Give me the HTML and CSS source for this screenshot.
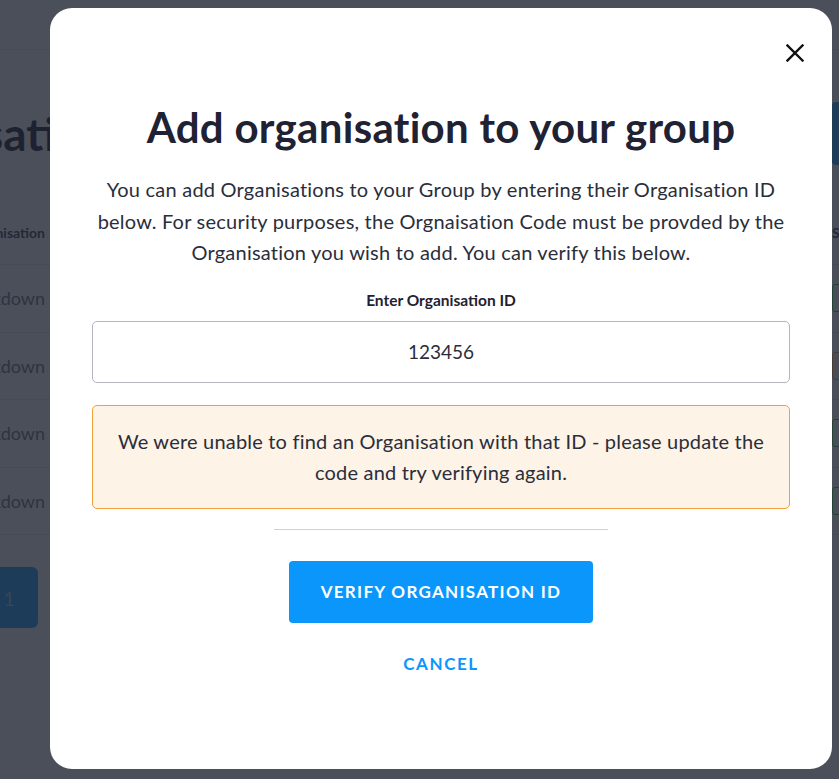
FILE: index.html
```html
<!DOCTYPE html>
<html lang="en">
<head>
<meta charset="utf-8">
<title>Add organisation to your group</title>
<link rel="stylesheet" href="styles.css">
</head>
<body>
<div class="page">
  <header class="topbar">
    <div class="tabs"><span class="tab">Organisations</span><span class="tab active">Settings</span></div>
  </header>
  <div class="title-row">
    <h2 class="page-title">Organisations</h2>
    <button class="primary-btn">Add organisation</button>
  </div>
  <div class="table">
    <div class="row head"><span class="cell">Organisation</span><span class="cell mid"></span><span class="cell">Status</span></div>
    <div class="row"><span class="cell">Breakdown</span><span class="cell mid"></span><span class="cell"><span class="badge ok">Verified</span></span></div>
    <div class="row"><span class="cell">Breakdown</span><span class="cell mid"></span><span class="cell"><span class="badge warn">Pending</span></span></div>
    <div class="row"><span class="cell">Breakdown</span><span class="cell mid"></span><span class="cell"><span class="badge ok">Verified</span></span></div>
    <div class="row"><span class="cell">Breakdown</span><span class="cell mid"></span><span class="cell"><span class="badge ok">Verified</span></span></div>
  </div>
  <div class="pager"><span class="page-btn">1</span></div>
</div>

<div class="overlay"></div>

<div class="modal" role="dialog" aria-labelledby="modal-title">
  <button class="close" aria-label="Close">
    <svg viewBox="0 0 18 18" width="18" height="18"><path d="M1.5 1.5 L16.5 16.5 M16.5 1.5 L1.5 16.5" stroke="#111" stroke-width="2.4" stroke-linecap="square" fill="none"/></svg>
  </button>
  <h1 id="modal-title" class="modal-title">Add organisation to your group</h1>
  <p class="intro">You can add Organisations to your Group by entering their Organisation ID below. For security purposes, the Orgnaisation Code must be provded by the Organisation you wish to add. You can verify this below.</p>
  <label class="field-label" for="org-id">Enter Organisation ID</label>
  <input id="org-id" class="field" type="text" value="123456">
  <div class="alert">We were unable to find an Organisation with that ID - please update the code and try verifying again.</div>
  <hr class="divider">
  <button class="verify">VERIFY ORGANISATION ID</button>
  <button class="cancel">CANCEL</button>
</div>
</body>
</html>
```

FILE: styles.css
```css
* { box-sizing: border-box; }
html, body { margin: 0; padding: 0; }
body {
  width: 839px;
  height: 779px;
  overflow: hidden;
  background: #ffffff;
  font-family: "Lato", "Liberation Sans", sans-serif;
}

/* background page */
.page { width: 839px; overflow: hidden; }
.topbar {
  height: 50px;
  border-bottom: 1px solid #e8e9ec;
  display: flex;
  justify-content: flex-end;
}
.tabs { display: flex; margin-right: -200px; }
.tab {
  font-size: 16px;
  font-weight: 700;
  color: #333;
  padding: 12px 16px 0;
  height: 49px;
}
.tab.active { color: #1a9fff; border-bottom: 2px solid #1a9fff; }
.tabs .tab:first-child { width: 0; overflow: hidden; padding: 0; }

.title-row {
  height: 150px;
  display: flex;
  align-items: flex-start;
  justify-content: space-between;
}
.page-title {
  margin: 56px 0 0 -156px;
  font-size: 46px;
  line-height: 56px;
  font-weight: 700;
  color: #1e2231;
  white-space: nowrap;
}
.primary-btn {
  flex: none;
  width: 200px;
  height: 63px;
  margin-right: -193px;
  margin-top: 52px;
  background: #1a9fff;
  border: none;
  border-radius: 4px;
  color: #fff;
  font: 700 16px "Lato", sans-serif;
}

.table { margin-left: -80px; width: 1000px; }
.row {
  display: grid;
  grid-template-columns: 125px 787px 88px;
  height: 67.5px;
  align-items: center;
  border-bottom: 1px solid #e4e5e8;
  font-size: 18px;
  color: #6f7380;
}
.row.head { height: 65px; font-size: 14px; font-weight: 700; color: #3a3e4a; }
.cell { white-space: nowrap; }
.row.head .cell:first-child { padding-left: 4px; }
.row .cell:first-child { text-align: right; }
.badge {
  display: inline-block;
  padding: 4px 8px;
  border: 1px solid;
  border-radius: 3px;
  font-size: 15px;
}
.badge.ok { border-color: #2ec94a; color: #6f7380; background: #f4fbf5; }
.badge.warn { border-color: #e8a64a; color: #6f7380; background: #fdf5ea; }

.pager { padding-top: 32px; margin-left: -20px; }
.page-btn {
  display: flex;
  align-items: center;
  justify-content: center;
  width: 58px;
  height: 61px;
  border-radius: 6px;
  background: #1a9fff;
  color: #a8c8e8;
  font-size: 20px;
}

.overlay {
  position: fixed;
  inset: 0;
  background: rgba(30, 35, 49, 0.8);
}

/* modal */
.modal {
  position: fixed;
  left: 50px;
  top: 8px;
  width: 782px;
  height: 761px;
  background: #fff;
  border-radius: 22px;
  padding: 95px 42px 0;
  display: flex;
  flex-direction: column;
  align-items: center;
  color: #262a37;
}
.close {
  position: absolute;
  top: 36px;
  right: 28px;
  width: 18px;
  height: 18px;
  padding: 0;
  border: none;
  background: none;
  display: block;
}
.close svg { display: block; }
.modal-title {
  margin: 0;
  font-size: 42px;
  line-height: 48px;
  font-weight: 700;
  letter-spacing: 0.3px;
  color: #1e2232;
  text-align: center;
  white-space: nowrap;
}
.intro {
  margin: 23px 0 0;
  padding: 0;
  font-size: 20px;
  line-height: 31.5px;
  letter-spacing: 0.22px;
  text-align: center;
  color: #2a2e3b;
}
.field-label {
  margin-top: 21px;
  font-size: 15.5px;
  line-height: 20px;
  font-weight: 700;
  color: #1e2232;
}
.field {
  margin-top: 11px;
  width: 100%;
  height: 62px;
  border: 1px solid #b4b6c0;
  border-radius: 5px;
  text-align: center;
  font: 400 19px "Lato", sans-serif;
  color: #2a2e3b;
  outline: none;
}
.alert {
  margin-top: 22px;
  width: 100%;
  padding: 20px 20px;
  background: #fdf3e6;
  border: 1px solid #f0a23a;
  border-radius: 5px;
  font-size: 20px;
  line-height: 31px;
  letter-spacing: 0.2px;
  text-align: center;
  color: #2a2e3b;
}
.divider {
  margin: 20px 0 0;
  width: 334px;
  height: 0;
  border: none;
  border-top: 1px solid #cfd0d4;
}
.verify {
  margin-top: 31px;
  width: 304px;
  height: 62px;
  background: #0b96fb;
  border: none;
  border-radius: 4px;
  color: #fff;
  font: 700 17px "Lato", sans-serif;
  letter-spacing: 1.3px;
}
.cancel {
  margin-top: 30px;
  height: 20px;
  padding: 0;
  border: none;
  background: none;
  color: #0b96fb;
  font: 700 17px "Lato", sans-serif;
  letter-spacing: 1.6px;
}
```
